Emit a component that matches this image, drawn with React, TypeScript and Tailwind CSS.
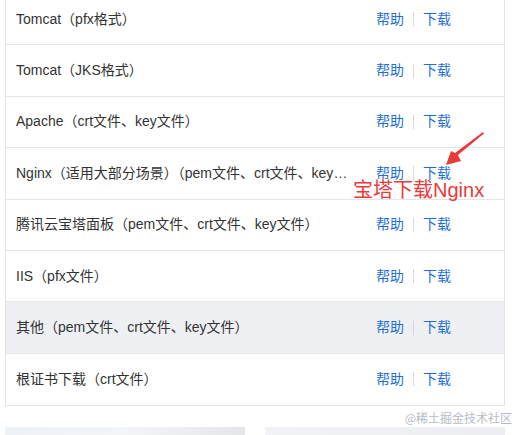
import React from "react";

const rows = [
  "Tomcat（pfx格式）",
  "Tomcat（JKS格式）",
  "Apache（crt文件、key文件）",
  "Nginx（适用大部分场景）（pem文件、crt文件、key文件）",
  "腾讯云宝塔面板（pem文件、crt文件、key文件）",
  "IIS（pfx文件）",
  "其他（pem文件、crt文件、key文件）",
  "根证书下载（crt文件）",
];

const font = { fontFamily: '"Liberation Sans", Arial, "Noto Sans CJK SC", sans-serif' };

export default function App() {
  return (
    <div className="relative w-[522px] h-[435px] overflow-hidden bg-white" style={font}>
      <div className="ml-[5px] w-[500px] -mt-[6px] border-l border-r border-b border-[#e4e4e4]">
        {rows.map((r, i) => (
          <div
            key={i}
            className={`flex items-center h-[51.4px] pl-[10px] ${i < rows.length - 1 ? "border-b border-[#e6e6e6]" : ""} ${i === 6 ? "bg-[#eef0f3]" : ""}`}
          >
            <div className="w-[334px] truncate text-[14px] text-[#333]">{r}</div>
            <div className="ml-[26px] flex items-center text-[14px] text-[#1f6fd8]">
              <span>帮助</span>
              <span className="mx-[9px] w-px h-[14px] bg-[#d8d8d8]" />
              <span>下载</span>
            </div>
          </div>
        ))}
      </div>
      <div className="flex justify-end pr-[10px] mt-[3px] h-[17px] items-center text-[12px] text-[#b8bcc4]" style={{ fontFamily: '"Noto Sans CJK SC", sans-serif' }}>
        @稀土掘金技术社区
      </div>
      <div className="flex ml-[5px] mt-[1px] gap-[20px]">
        <div className="w-[240px] h-[12px] bg-gradient-to-r from-[#eef1f6] via-[#f3f5f8] to-[#e4e6ea]" />
        <div className="w-[240px] h-[12px] bg-gradient-to-r from-[#f1f3f7] to-[#eceef2]" />
      </div>
      <div
        className="absolute left-[353px] top-[177px] text-[20px] leading-[26px] text-[#ea3a3a] whitespace-nowrap"
        style={{ fontFamily: '"Liberation Sans", Arial, "Noto Sans CJK SC", sans-serif' }}
      >
        宝塔下载Nginx
      </div>
      <svg className="absolute left-0 top-0" width="522" height="435" viewBox="0 0 522 435">
        <polygon points="483,132 484,133.5 458,155 461,161 446,165 451,151 455,153" fill="#ea3a3a" />
      </svg>
    </div>
  );
}
